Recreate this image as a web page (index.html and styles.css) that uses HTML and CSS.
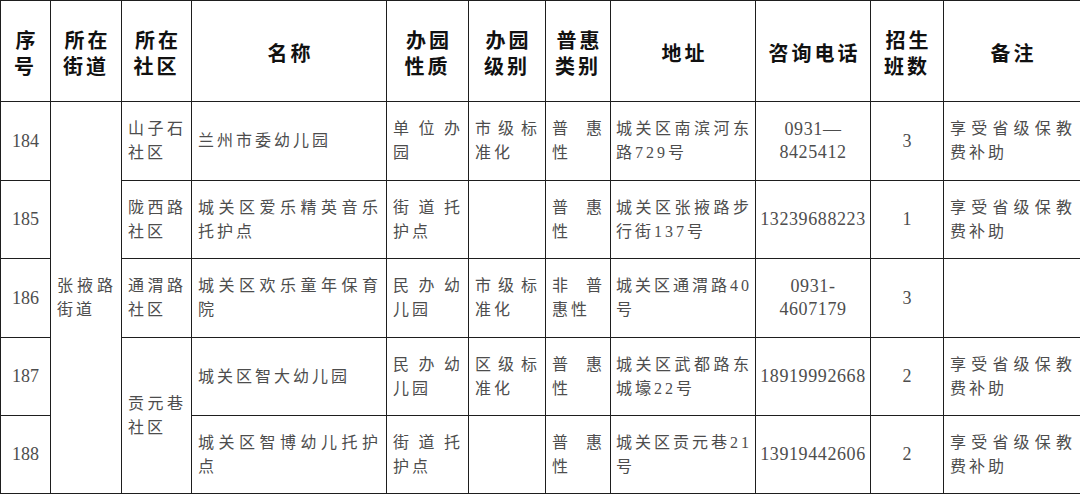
FILE: index.html
```html
<!DOCTYPE html>
<html lang="zh-CN">
<head>
<meta charset="utf-8">
<title>幼儿园招生信息</title>
<link rel="stylesheet" href="styles.css">
</head>
<body>
<table class="sheet">
  <colgroup>
    <col class="c-no"><col class="c-street"><col class="c-comm"><col class="c-name"><col class="c-type"><col class="c-level"><col class="c-pu"><col class="c-addr"><col class="c-tel"><col class="c-cls"><col class="c-note">
  </colgroup>
  <thead>
    <tr class="head">
      <th>序<br>号</th>
      <th>所在<br>街道</th>
      <th>所在<br>社区</th>
      <th>名称</th>
      <th>办园<br>性质</th>
      <th>办园<br>级别</th>
      <th>普惠<br>类别</th>
      <th>地址</th>
      <th>咨询电话</th>
      <th>招生<br>班数</th>
      <th>备注</th>
    </tr>
  </thead>
  <tbody>
    <tr class="r-tall">
      <td class="num">184</td>
      <td class="txt" rowspan="5">张掖路街道</td>
      <td class="txt">山子石社区</td>
      <td class="txt">兰州市委幼儿园</td>
      <td class="txt">单位办园</td>
      <td class="txt">市级标准化</td>
      <td class="txt">普惠性</td>
      <td class="txt addr">城关区南滨河东路729号</td>
      <td class="tel">0931—<br>8425412</td>
      <td class="num">3</td>
      <td class="txt">享受省级保教费补助</td>
    </tr>
    <tr class="r-short">
      <td class="num">185</td>
      <td class="txt">陇西路社区</td>
      <td class="txt">城关区爱乐精英音乐托护点</td>
      <td class="txt">街道托护点</td>
      <td class="txt"></td>
      <td class="txt">普惠性</td>
      <td class="txt addr">城关区张掖路步行街137号</td>
      <td class="tel">13239688223</td>
      <td class="num">1</td>
      <td class="txt">享受省级保教费补助</td>
    </tr>
    <tr class="r-tall">
      <td class="num">186</td>
      <td class="txt">通渭路社区</td>
      <td class="txt">城关区欢乐童年保育院</td>
      <td class="txt">民办幼儿园</td>
      <td class="txt">市级标准化</td>
      <td class="txt">非普惠性</td>
      <td class="txt addr">城关区通渭路40号</td>
      <td class="tel">0931-<br>4607179</td>
      <td class="num">3</td>
      <td class="txt"></td>
    </tr>
    <tr class="r-short">
      <td class="num">187</td>
      <td class="txt" rowspan="2">贡元巷社区</td>
      <td class="txt">城关区智大幼儿园</td>
      <td class="txt">民办幼儿园</td>
      <td class="txt">区级标准化</td>
      <td class="txt">普惠性</td>
      <td class="txt addr">城关区武都路东城壕22号</td>
      <td class="tel">18919992668</td>
      <td class="num">2</td>
      <td class="txt">享受省级保教费补助</td>
    </tr>
    <tr class="r-short">
      <td class="num">188</td>
      <td class="txt">城关区智博幼儿托护点</td>
      <td class="txt">街道托护点</td>
      <td class="txt"></td>
      <td class="txt">普惠性</td>
      <td class="txt addr">城关区贡元巷21号</td>
      <td class="tel">13919442606</td>
      <td class="num">2</td>
      <td class="txt">享受省级保教费补助</td>
    </tr>
  </tbody>
</table>
</body>
</html>
```

FILE: styles.css
```css
html, body {
  margin: 0;
  padding: 0;
  background: #ffffff;
}

.sheet {
  width: 1080px;
  border-collapse: collapse;
  table-layout: fixed;
  font-family: "Liberation Serif", "Noto Sans CJK SC", serif;
  color: #4d4d4d;
}

.c-no { width: 50px; }
.c-street { width: 71px; }
.c-comm { width: 70px; }
.c-name { width: 195px; }
.c-type { width: 82px; }
.c-level { width: 77px; }
.c-pu { width: 65px; }
.c-addr { width: 145px; }
.c-tel { width: 115px; }
.c-cls { width: 73px; }
.c-note { width: 137px; }

.sheet th,
.sheet td {
  border: 1px solid #1e1e1e;
  vertical-align: middle;
  padding: 0;
}

.sheet .head {
  height: 101px;
}

.sheet .head th {
  font-family: "Noto Sans CJK SC", sans-serif;
  font-weight: 700;
  font-size: 20px;
  line-height: 26px;
  letter-spacing: 3px;
  text-indent: 3px;
  color: #111111;
  text-align: center;
  padding-top: 4px;
}

.sheet .r-tall { height: 79px; }
.sheet .r-short { height: 78px; }

.sheet .txt {
  font-size: 16px;
  line-height: 24px;
  letter-spacing: 3px;
  text-align: justify;
  text-justify: inter-character;
  padding: 0 5px 0 6px;
  word-break: break-all;
}

.sheet .addr {
  padding: 0 3px 0 5px;
}

.sheet .num {
  font-size: 18px;
  text-align: center;
}

.sheet .tel {
  font-size: 18px;
  line-height: 23px;
  letter-spacing: 0.6px;
  text-align: center;
  padding: 0 2px;
}
```
